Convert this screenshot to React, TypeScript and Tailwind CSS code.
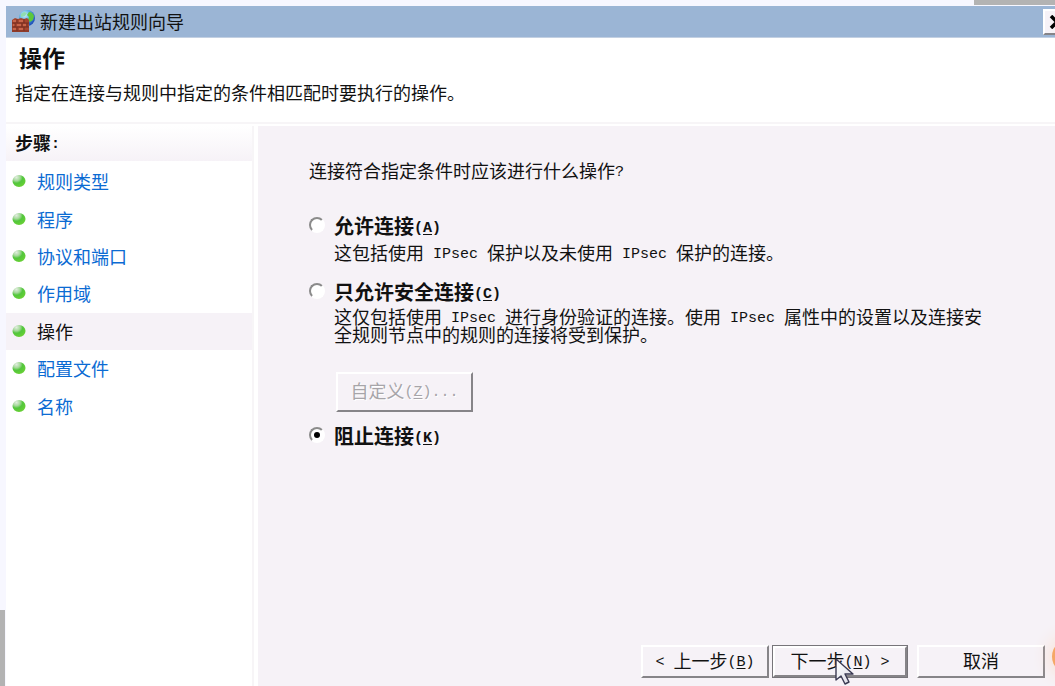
import { useState } from "react";
import type { ReactNode } from "react";

const STEPS = ["规则类型", "程序", "协议和端口", "作用域", "操作", "配置文件", "名称"];
const CURRENT_STEP = "操作";

type Action = "allow" | "secure" | "block";

// Latin characters are half the width of the Chinese ones
function Half({ children }: { children: ReactNode }) {
  return (
    <span className="align-[2px] font-['Liberation_Mono','Noto_Sans_CJK_SC',monospace] text-[15px] leading-[0]">
      {children}
    </span>
  );
}

function Hotkey({ letter }: { letter: string }) {
  return (
    <Half>
      (<span className="underline underline-offset-2">{letter}</span>)
    </Half>
  );
}

function FirewallIcon() {
  return (
    <svg width="24" height="24" viewBox="0 0 24 24" aria-hidden="true">
      <defs>
        <radialGradient id="globe" cx="0.35" cy="0.3" r="0.75">
          <stop offset="0" stopColor="#d8f6fb" />
          <stop offset="0.5" stopColor="#4fa9e0" />
          <stop offset="1" stopColor="#1846b4" />
        </radialGradient>
      </defs>
      <circle cx="15" cy="8" r="8" fill="url(#globe)" />
      <path d="M17 2c3 0 4 2 5 4l-1 4-3 2-2-2 1-3-2-2z" fill="#5cc83c" />
      <path d="M9 4l3-2 3 1-2 3-4 1z" fill="#8fdcb0" />
      <path d="M0 10l3-2 3 1 3-1 3 1 3-1 2 2v12H0z" fill="#a5452f" />
      <path d="M1 10h3v2H1zM7 10h4v2H7zM1 14h2v2H1zM5 14h4v2H5zM11 14h3v2h-3zM1 18h3v2H1zM7 18h4v2H7z" fill="#c8654a" />
      <path
        d="M0 13h17M0 17h17M0 21h17M5 9v4M12 9v4M3 13v4M10 13v4M15 13v4M5 17v4M12 17v4"
        stroke="#6e2c20"
        strokeWidth="0.8"
        fill="none"
      />
    </svg>
  );
}

function StepDot() {
  return (
    <svg width="14" height="13" viewBox="0 0 14 13" className="shrink-0" aria-hidden="true">
      <defs>
        <radialGradient id="dot" cx="0.3" cy="0.2" r="0.8">
          <stop offset="0" stopColor="#e2ede0" />
          <stop offset="0.35" stopColor="#a5d99a" />
          <stop offset="0.6" stopColor="#52c63c" />
          <stop offset="1" stopColor="#66cf35" />
        </radialGradient>
      </defs>
      <ellipse cx="7" cy="6" rx="6.5" ry="6" fill="url(#dot)" />
    </svg>
  );
}

function Cursor() {
  return (
    <svg
      width="20"
      height="28"
      viewBox="0 0 20 28"
      className="pointer-events-none absolute top-3 left-[62px]"
      aria-hidden="true"
    >
      <defs>
        <linearGradient id="cursor" x1="0" y1="0" x2="1" y2="1">
          <stop offset="0" stopColor="#ffffff" />
          <stop offset="1" stopColor="#dcdce6" />
        </linearGradient>
      </defs>
      <path
        d="M1 1v21l5-4 4 8 4-2-4-8h8z"
        fill="url(#cursor)"
        stroke="#3a3a52"
        strokeWidth="1.4"
        strokeLinejoin="round"
      />
    </svg>
  );
}

interface OptionProps {
  value: Action;
  selected: Action;
  onSelect: (value: Action) => void;
  label: string;
  letter: string;
}

function Option({ value, selected, onSelect, label, letter }: OptionProps) {
  return (
    <div className="flex h-[26px] gap-[9px]">
      <input
        type="radio"
        id={value}
        name="action"
        checked={selected === value}
        onChange={() => onSelect(value)}
        className="mt-[3px] flex size-4 shrink-0 appearance-none items-center justify-center rounded-full border-2 border-t-[#8b8b8b] border-r-white border-b-white border-l-[#8b8b8b] bg-white before:size-[6px] before:rounded-full checked:before:bg-black"
      />
      <label htmlFor={value} className="text-[20px] leading-6 font-bold">
        {label}
        <Hotkey letter={letter} />
      </label>
    </div>
  );
}

const BEVEL =
  "border-2 border-t-white border-r-[#868488] border-b-[#868488] border-l-white bg-[#f6f2f7] pb-1 leading-6";

export default function App() {
  const [action, setAction] = useState<Action>("block");

  return (
    <div className="relative flex min-h-screen flex-col overflow-hidden bg-[#f7f7ff] pt-[6px] pl-[6px] font-['Noto_Sans_CJK_SC',sans-serif] text-[18px] text-[#111111]">
      <div className="absolute top-0 right-0 h-[5px] w-[81px] bg-[#b3b3b3]" />
      <div className="absolute bottom-0 left-0 h-[76px] w-[5px] bg-[#b3b3b3]" />

      <div className="flex h-8 shrink-0 items-center overflow-hidden border-b border-[#c3d0e2] bg-[#9bb5d5] pl-[6px]">
        <FirewallIcon />
        <span className="ml-1 flex-1">新建出站规则向导</span>
        <button
          type="button"
          aria-label="关闭"
          className="-mr-4 flex h-[26px] w-7 items-center justify-center border-2 border-t-white border-r-[#868488] border-b-[#868488] border-l-white bg-[#f6f2f7]"
        >
          <svg width="16" height="14" viewBox="0 0 16 14" aria-hidden="true">
            <path d="M2 1l12 12M14 1L2 13" stroke="#000" strokeWidth="3.5" />
          </svg>
        </button>
      </div>

      <header className="h-[86px] shrink-0 border-b-2 border-[#f7f5f7] bg-white pt-[3px] pl-[9px]">
        <h1 className="pl-1 text-[23px] leading-8 font-bold">操作</h1>
        <p className="mt-[6px] leading-[26px]">指定在连接与规则中指定的条件相匹配时要执行的操作。</p>
      </header>

      <div className="flex flex-1 border-t-2 border-white">
        <nav className="w-[248px] shrink-0 border-r-2 border-[#f7f5f7] bg-white">
          <h2 className="h-[35px] bg-linear-to-b from-white to-[#f6f2f7] pl-[9px] leading-8 font-bold">
            步骤<Half>:</Half>
          </h2>
          <ul className="mt-[2px] flex h-[262px] flex-col">
            {STEPS.map((step) => (
              <li
                key={step}
                className={`flex flex-1 items-center gap-[11px] pl-[6px] ${
                  step === CURRENT_STEP ? "bg-[#f6f2f7]" : ""
                }`}
              >
                <StepDot />
                <a
                  href="#"
                  className={step === CURRENT_STEP ? "text-[#111111]" : "text-[#0b6bd3]"}
                >
                  {step}
                </a>
              </li>
            ))}
          </ul>
        </nav>

        <main className="flex flex-1 flex-col border-l-4 border-white bg-[#f6f2f7] pt-8 pr-[10px] pb-2 pl-[51px]">
          <p className="leading-6">
            连接符合指定条件时应该进行什么操作<Half>?</Half>
          </p>

          <div className="mt-8">
            <Option value="allow" selected={action} onSelect={setAction} label="允许连接" letter="A" />
            <p className="pl-[25px] leading-6">
              这包括使用<Half> IPsec </Half>保护以及未使用<Half> IPsec </Half>保护的连接。
            </p>
          </div>

          <div className="mt-4">
            <Option
              value="secure"
              selected={action}
              onSelect={setAction}
              label="只允许安全连接"
              letter="C"
            />
            <p className="mt-px max-w-[684px] pl-[25px] leading-[18px]">
              这仅包括使用<Half> IPsec </Half>进行身份验证的连接。使用<Half> IPsec </Half>
              属性中的设置以及连接安全规则节点中的规则的连接将受到保护。
            </p>
            <button
              type="button"
              disabled
              className={`mt-[29px] ml-[27px] h-10 w-[137px] text-[#a7a5a9] [text-shadow:1px_1px_0_white] ${BEVEL}`}
            >
              自定义
              <Hotkey letter="Z" />
              <Half>...</Half>
            </button>
          </div>

          <div className="mt-3">
            <Option value="block" selected={action} onSelect={setAction} label="阻止连接" letter="K" />
          </div>

          <div className="mt-auto flex justify-end">
            <button type="button" className={`h-[33px] w-32 ${BEVEL}`}>
              <Half>&lt; </Half>上一步
              <Hotkey letter="B" />
            </button>
            <div className="relative ml-[3px] border border-[#77757a]">
              <button type="button" className={`block h-[31px] w-[134px] ${BEVEL}`}>
                下一步
                <Hotkey letter="N" />
                <Half> &gt;</Half>
              </button>
              <Cursor />
            </div>
            <button type="button" className={`ml-[9px] h-[33px] w-32 ${BEVEL}`}>
              取消
            </button>
          </div>
        </main>
      </div>

      <div className="absolute -right-8 bottom-[12px] size-[35px] rounded-full bg-[#f5a766] shadow-[0_0_20px_#fbd9c4]" />
    </div>
  );
}
